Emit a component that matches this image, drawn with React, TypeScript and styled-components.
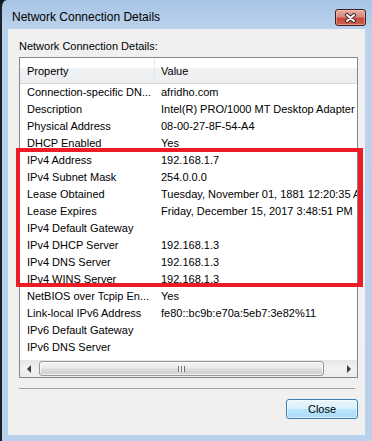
import React from 'react';
import styled, { createGlobalStyle } from 'styled-components';

const details: [string, string][] = [
  ['Connection-specific DN...', 'afridho.com'],
  ['Description', 'Intel(R) PRO/1000 MT Desktop Adapter'],
  ['Physical Address', '08-00-27-8F-54-A4'],
  ['DHCP Enabled', 'Yes'],
  ['IPv4 Address', '192.168.1.7'],
  ['IPv4 Subnet Mask', '254.0.0.0'],
  ['Lease Obtained', 'Tuesday, November 01, 1881 12:20:35 AM'],
  ['Lease Expires', 'Friday, December 15, 2017 3:48:51 PM'],
  ['IPv4 Default Gateway', ''],
  ['IPv4 DHCP Server', '192.168.1.3'],
  ['IPv4 DNS Server', '192.168.1.3'],
  ['IPv4 WINS Server', '192.168.1.3'],
  ['NetBIOS over Tcpip En...', 'Yes'],
  ['Link-local IPv6 Address', 'fe80::bc9b:e70a:5eb7:3e82%11'],
  ['IPv6 Default Gateway', ''],
  ['IPv6 DNS Server', ''],
];

const App = () => {
  return (
    <>
      <GlobalStyle />
      <Window>
        <TitleBar>
          <Title>Network Connection Details</Title>
          <CloseButton aria-label="Close">
            <svg width="13" height="10" viewBox="0 0 13 10">
              <path d="M3 2 L10 8 M10 2 L3 8" stroke="#3a2a30" strokeWidth="4" strokeLinecap="round" />
              <path d="M3 2 L10 8 M10 2 L3 8" stroke="#fff" strokeWidth="2" strokeLinecap="round" />
            </svg>
          </CloseButton>
        </TitleBar>
        <Client>
          <Caption>Network Connection Details:</Caption>
          <List>
            <Header>
              <HeaderCell $first>Property</HeaderCell>
              <HeaderCell>Value</HeaderCell>
            </Header>
            <Body>
              {details.map(([name, value]) => (
                <Row key={name}>
                  <Cell $first>{name}</Cell>
                  <Cell>{value}</Cell>
                </Row>
              ))}
            </Body>
            <ScrollBar>
              <ArrowButton>
                <Arrow $dir="left" />
              </ArrowButton>
              <Thumb>
                <Grip />
              </Thumb>
              <Track />
              <ArrowButton>
                <Arrow $dir="right" />
              </ArrowButton>
            </ScrollBar>
          </List>
          <Separator />
          <DialogButton>Close</DialogButton>
        </Client>
        <Highlight />
      </Window>
    </>
  );
};

const GlobalStyle = createGlobalStyle`
  body {
    margin: 0;
    background: #10161e;
    font-family: "Liberation Sans", Arial, sans-serif;
  }
`;

const Window = styled.div`
  position: relative;
  box-sizing: border-box;
  width: 372px;
  height: 441px;
  display: flex;
  flex-direction: column;
  border-left: 2px solid #1b222c;
  border-top-left-radius: 7px;
  background: linear-gradient(#a8c4e5 0, #bad2ec 29px, #b9d1ea 100%);
`;

const TitleBar = styled.div`
  height: 29px;
  display: flex;
  justify-content: space-between;
  align-items: flex-start;
  padding-left: 10px;
`;

const Title = styled.div`
  margin-top: 10px;
  font-size: 12px;
  line-height: 15px;
  color: #000;
`;

const CloseButton = styled.div`
  box-sizing: border-box;
  width: 31px;
  height: 17px;
  margin-top: 9px;
  margin-right: 6px;
  display: flex;
  align-items: center;
  justify-content: center;
  border: 1px solid #3d2026;
  border-radius: 3px;
  background: linear-gradient(#e8ada1 0%, #d98a7c 45%, #c5493b 55%, #d3604c 100%);
  box-shadow: inset 0 0 0 1px rgba(255, 210, 200, 0.45);
`;

const Client = styled.div`
  flex: 1;
  margin: 0 7px 6px 6px;
  padding: 9px 7px 0 11px;
  background: #f0f0f0;
  display: flex;
  flex-direction: column;
`;

const Caption = styled.div`
  font-size: 11px;
  line-height: 16px;
  color: #000;
  margin-bottom: 3px;
`;

const List = styled.div`
  box-sizing: border-box;
  height: 321px;
  border: 1px solid #828790;
  background: #fff;
  display: flex;
  flex-direction: column;
  overflow: hidden;
`;

const Header = styled.div`
  display: flex;
  height: 25px;
  border-bottom: 1px solid #d5d5d5;
  background: linear-gradient(#ffffff 0, #ffffff 42%, #f1f2f4 42%, #eceef0 100%);
`;

const HeaderCell = styled.div<{ $first?: boolean }>`
  box-sizing: border-box;
  width: ${(p) => (p.$first ? '135px' : 'auto')};
  flex: ${(p) => (p.$first ? 'none' : '1')};
  padding-left: ${(p) => (p.$first ? '7px' : '6px')};
  border-right: ${(p) => (p.$first ? '1px solid #e3e8ee' : 'none')};
  font-size: 11px;
  line-height: 26px;
  color: #000;
`;

const Body = styled.div`
  flex: 1;
`;

const Row = styled.div`
  display: flex;
  height: 17px;
`;

const Cell = styled.div<{ $first?: boolean }>`
  box-sizing: border-box;
  width: ${(p) => (p.$first ? '135px' : 'auto')};
  flex: none;
  padding-left: ${(p) => (p.$first ? '7px' : '6px')};
  overflow: hidden;
  white-space: nowrap;
  font-size: 11px;
  line-height: 17px;
  color: #000;
`;

const ScrollBar = styled.div`
  height: 17px;
  display: flex;
  align-items: center;
  background: linear-gradient(#e6e6e6, #f2f2f2 50%, #ececec);
`;

const ArrowButton = styled.div`
  width: 17px;
  height: 17px;
  display: flex;
  align-items: center;
  justify-content: center;
`;

const Arrow = styled.div<{ $dir: 'left' | 'right' }>`
  width: 0;
  height: 0;
  border-top: 4px solid transparent;
  border-bottom: 4px solid transparent;
  border-left: ${(p) => (p.$dir === 'right' ? '4px solid #3c3c3c' : 'none')};
  border-right: ${(p) => (p.$dir === 'left' ? '4px solid #3c3c3c' : 'none')};
`;

const Thumb = styled.div`
  box-sizing: border-box;
  width: 285px;
  height: 15px;
  margin-left: 2px;
  border: 1px solid #979797;
  border-radius: 3px;
  background: linear-gradient(#f4f4f4 0%, #ebebeb 45%, #dbdbdb 55%, #cfcfcf 100%);
  box-shadow: inset 0 0 0 1px rgba(255, 255, 255, 0.7);
  display: flex;
  align-items: center;
  justify-content: center;
`;

const Grip = styled.div`
  width: 7px;
  height: 6px;
  background: repeating-linear-gradient(to right, #707070 0, #707070 1px, #f0f0f0 1px, #f0f0f0 3px);
`;

const Track = styled.div`
  flex: 1;
`;

const Separator = styled.div`
  margin-top: 10px;
  margin-right: 3px;
  border-top: 1px solid #a0a0a0;
`;

const DialogButton = styled.div`
  align-self: flex-end;
  box-sizing: border-box;
  width: 72px;
  height: 20px;
  margin-top: 10px;
  border: 1px solid #3c7fb1;
  border-radius: 3px;
  background: linear-gradient(#eaf6fd 0%, #d9f0fc 48%, #bee6fd 52%, #a7d9f5 100%);
  box-shadow: inset 0 0 0 1px rgba(255, 255, 255, 0.6);
  font-size: 11px;
  line-height: 18px;
  text-align: center;
  color: #000;
`;

const Highlight = styled.div`
  position: absolute;
  left: 14px;
  top: 148px;
  box-sizing: border-box;
  width: 347px;
  height: 139px;
  border: 4px solid #ed1c24;
  border-right-width: 5px;
  pointer-events: none;
`;

export default App;
